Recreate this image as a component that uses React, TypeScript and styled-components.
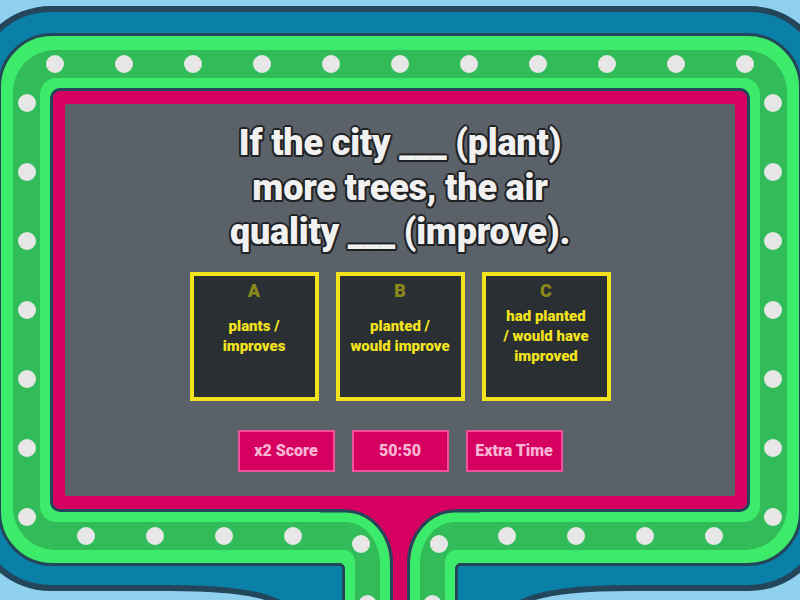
import React from 'react';
import styled, { createGlobalStyle } from 'styled-components';

const colors = {
  sky: '#8fd0ef',
  navy: '#24465a',
  blue: '#0a7fa8',
  green: '#3beb69',
  greenDark: '#31bc59',
  pink: '#d5005f',
  pinkLight: '#f0519a',
  pinkText: '#f8b4d4',
  screen: '#5a6168',
  card: '#2a2f33',
  yellow: '#f3e31d',
  olive: '#8c8a1a',
  bulb: '#e6e6e6',
};

const GlobalStyle = createGlobalStyle`
  html, body {
    margin: 0;
    padding: 0;
  }
  body {
    width: 800px;
    height: 600px;
    overflow: hidden;
    font-family: "Roboto", "Liberation Sans", sans-serif;
  }
`;

const Stage = styled.div`
  position: relative;
  width: 800px;
  height: 600px;
  overflow: hidden;
  background: ${colors.sky};
  display: flex;
  flex-direction: column;
`;

const BlueFrame = styled.div`
  box-sizing: border-box;
  flex-shrink: 0;
  margin: 6px -29px 0;
  height: 585px;
  border: 6px solid ${colors.navy};
  border-radius: 80px;
  background: ${colors.blue};
  padding: 21px 21px 19px;
  display: flex;
  flex-direction: column;
`;

const GreenFrame = styled.div`
  flex: 1;
  display: flex;
  flex-direction: column;
  border: 3px solid ${colors.navy};
  border-radius: 54px;
  background: ${colors.green};
  padding: 14px 12px 13px;
`;

const BulbTrack = styled.div`
  flex: 1;
  display: flex;
  flex-direction: column;
  background: ${colors.greenDark};
  border-radius: 42px;
  padding: 28px 27px;
`;

const InnerBand = styled.div`
  flex: 1;
  display: flex;
  flex-direction: column;
  background: ${colors.green};
  border-radius: 16px;
  padding: 10px;
`;

const PinkFrame = styled.div`
  flex: 1;
  display: flex;
  flex-direction: column;
  border: 3px solid ${colors.navy};
  border-radius: 10px;
  background: ${colors.pink};
  padding: 13px 12px;
`;

const Screen = styled.div`
  flex: 1;
  display: flex;
  flex-direction: column;
  align-items: center;
  background: ${colors.screen};
  border-radius: 3px;
  padding-top: 17px;
`;

const Question = styled.h1`
  margin: 0;
  font-size: 36px;
  font-weight: 900;
  line-height: 44.5px;
  letter-spacing: -0.2px;
  text-align: center;
  color: #f1f1f1;
  text-shadow:
    2px 0 0 #202224, -2px 0 0 #202224, 0 2px 0 #202224, 0 -2px 0 #202224,
    1.5px 1.5px 0 #202224, -1.5px 1.5px 0 #202224, 1.5px -1.5px 0 #202224, -1.5px -1.5px 0 #202224;
`;

const CardRow = styled.div`
  display: flex;
  gap: 17px;
  margin-top: 17px;
`;

const Card = styled.div`
  box-sizing: border-box;
  width: 129px;
  height: 129px;
  border: 4px solid ${colors.yellow};
  background: ${colors.card};
  display: flex;
  flex-direction: column;
  align-items: center;
`;

const Letter = styled.div`
  margin-top: 4px;
  height: 22px;
  line-height: 22px;
  font-size: 18px;
  font-weight: 900;
  color: ${colors.olive};
`;

const AnswerText = styled.div`
  flex: 1;
  display: flex;
  align-items: center;
  justify-content: center;
  padding: 0 6px 26px;
  text-align: center;
  font-size: 15px;
  font-weight: 900;
  line-height: 20px;
  color: ${colors.yellow};
`;

const PowerRow = styled.div`
  display: flex;
  gap: 17px;
  margin-top: 29px;
`;

const PowerButton = styled.button`
  box-sizing: border-box;
  width: 97px;
  height: 42px;
  padding: 0;
  border: 2px solid ${colors.pinkLight};
  background: ${colors.pink};
  color: ${colors.pinkText};
  font-family: inherit;
  font-size: 16px;
  font-weight: 900;
  display: flex;
  align-items: center;
  justify-content: center;
  cursor: pointer;
`;

const Decor = styled.svg`
  position: absolute;
  left: 0;
  top: 0;
  pointer-events: none;
`;

const answers = [
  { letter: 'A', lines: ['plants /', 'improves'] },
  { letter: 'B', lines: ['planted /', 'would improve'] },
  { letter: 'C', lines: ['had planted', '/ would have', 'improved'] },
];

const powers = ['x2 Score', '50:50', 'Extra Time'];

const bulbs: [number, number][] = [];
for (let k = 0; k < 11; k++) bulbs.push([55 + 69 * k, 64]);
for (let k = 0; k < 7; k++) {
  bulbs.push([27, 103 + 69 * k]);
  bulbs.push([773, 103 + 69 * k]);
}
[86, 155, 224, 293, 507, 576, 645, 714].forEach(x => bulbs.push([x, 536]));
bulbs.push([361, 544], [367.5, 604], [439, 544], [432.5, 604]);

// one side of the stand; the other is its mirror image
const StandSide = () => (
  <>
    <path
      d="M338 512 L345 512 A45 51 0 0 1 390 563 L390 620 L345 620 L345 569 A6 6 0 0 0 339 563 L338 563 Z"
      fill={colors.green}
    />
    <path
      d="M338 522 L345 522 A35 41 0 0 1 380 563 L380 620 L355 620 L355 563 A10 13 0 0 0 345 550 L338 550 Z"
      fill={colors.greenDark}
    />
    <path d="M320 511 L345 511 A46.5 52 0 0 1 391.5 563 L391.5 620" fill="none" stroke={colors.navy} strokeWidth={3} />
    <path d="M320 564.5 L339 564.5 A4.5 4.5 0 0 1 343.5 569 L343.5 620" fill="none" stroke={colors.navy} strokeWidth={3} />
    <path d="M170 588 Q290 588 294 620" fill="none" stroke={colors.navy} strokeWidth={6} />
  </>
);

const FrameDecor = () => (
  <Decor width={800} height={600} viewBox="0 0 800 600">
    <path d="M170 584 L170 588 Q290 588 294 620 L506 620 Q510 588 630 588 L630 584 Z" fill={colors.blue} />
    <rect x={345} y={508} width={110} height={112} fill={colors.pink} />
    <StandSide />
    <g transform="translate(800 0) scale(-1 1)">
      <StandSide />
    </g>
    {bulbs.map(([x, y], i) => (
      <circle key={i} cx={x} cy={y} r={9} fill={colors.bulb} />
    ))}
  </Decor>
);

export default function App() {
  return (
    <>
      <GlobalStyle />
      <Stage>
        <BlueFrame>
          <GreenFrame>
            <BulbTrack>
              <InnerBand>
                <PinkFrame>
                  <Screen>
                    <Question>
                      If the city ___ (plant)
                      <br />
                      more trees, the air
                      <br />
                      quality ___ (improve).
                    </Question>
                    <CardRow>
                      {answers.map(a => (
                        <Card key={a.letter}>
                          <Letter>{a.letter}</Letter>
                          <AnswerText>
                            <span>
                              {a.lines.map((l, i) => (
                                <React.Fragment key={i}>
                                  {i > 0 && <br />}
                                  {l}
                                </React.Fragment>
                              ))}
                            </span>
                          </AnswerText>
                        </Card>
                      ))}
                    </CardRow>
                    <PowerRow>
                      {powers.map(p => (
                        <PowerButton key={p}>{p}</PowerButton>
                      ))}
                    </PowerRow>
                  </Screen>
                </PinkFrame>
              </InnerBand>
            </BulbTrack>
          </GreenFrame>
        </BlueFrame>
        <FrameDecor />
      </Stage>
    </>
  );
}
